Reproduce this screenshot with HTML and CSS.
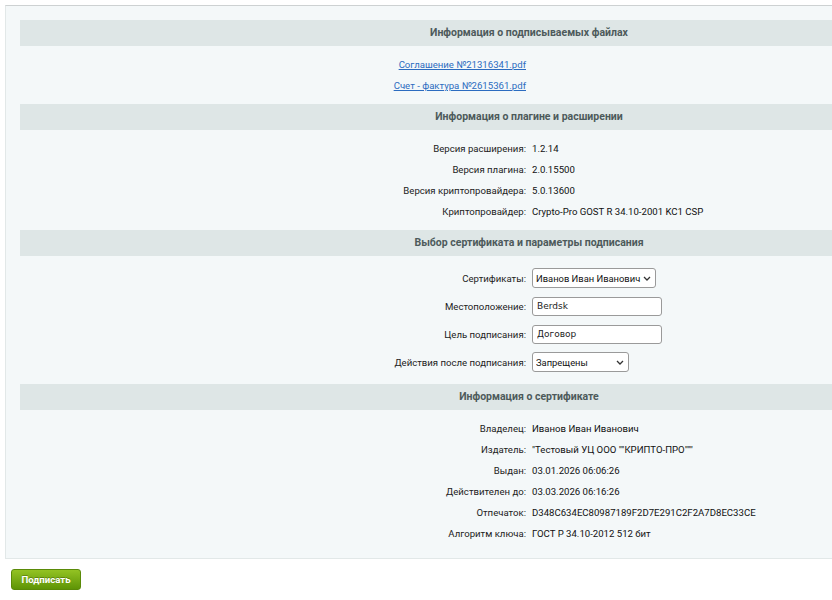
FILE: index.html
```html
<!DOCTYPE html>
<html lang="ru">
<head>
<meta charset="utf-8">
<title>Подписание</title>
<link rel="stylesheet" href="styles.css">
</head>
<body>
<div class="page">
  <div class="panel">
    <div class="sheet">
      <section class="section">
        <h2 class="head">Информация о подписываемых файлах</h2>
        <div class="rows">
          <div class="row"><div class="label"><a href="#">Соглашение №21316341.pdf</a></div><div class="value"></div></div>
          <div class="row"><div class="label"><a href="#">Счет - фактура №2615361.pdf</a></div><div class="value"></div></div>
        </div>
      </section>
      <section class="section">
        <h2 class="head">Информация о плагине и расширении</h2>
        <div class="rows">
          <div class="row"><div class="label">Версия расширения:</div><div class="value">1.2.14</div></div>
          <div class="row"><div class="label">Версия плагина:</div><div class="value">2.0.15500</div></div>
          <div class="row"><div class="label">Версия криптопровайдера:</div><div class="value">5.0.13600</div></div>
          <div class="row"><div class="label">Криптопровайдер:</div><div class="value">Crypto-Pro GOST R 34.10-2001 KC1 CSP</div></div>
        </div>
      </section>
      <section class="section">
        <h2 class="head">Выбор сертификата и параметры подписания</h2>
        <div class="rows">
          <div class="row form"><label class="label" for="cert">Сертификаты:</label><div class="value">
            <span class="select-wrap cert"><select id="cert" class="select"><option>Иванов Иван Иванович</option></select><svg class="chev" viewBox="0 0 8 5" width="8" height="5"><path d="M1 1 L4 4 L7 1" fill="none" stroke="#333" stroke-width="1.3"/></svg></span></div></div>
          <div class="row form"><label class="label" for="loc">Местоположение:</label><div class="value">
            <input id="loc" class="input" type="text" value="Berdsk"></div></div>
          <div class="row form"><label class="label" for="goal">Цель подписания:</label><div class="value">
            <input id="goal" class="input" type="text" value="Договор"></div></div>
          <div class="row form"><label class="label" for="act">Действия после подписания:</label><div class="value">
            <span class="select-wrap act"><select id="act" class="select"><option>Запрещены</option></select><svg class="chev" viewBox="0 0 8 5" width="8" height="5"><path d="M1 1 L4 4 L7 1" fill="none" stroke="#333" stroke-width="1.3"/></svg></span></div></div>
        </div>
      </section>
      <section class="section">
        <h2 class="head">Информация о сертификате</h2>
        <div class="rows">
          <div class="row"><div class="label">Владелец:</div><div class="value">Иванов Иван Иванович</div></div>
          <div class="row"><div class="label">Издатель:</div><div class="value">"Тестовый УЦ ООО ""КРИПТО-ПРО"""</div></div>
          <div class="row"><div class="label">Выдан:</div><div class="value">03.01.2026 06:06:26</div></div>
          <div class="row"><div class="label">Действителен до:</div><div class="value">03.03.2026 06:16:26</div></div>
          <div class="row"><div class="label">Отпечаток:</div><div class="value">D348C634EC80987189F2D7E291C2F2A7D8EC33CE</div></div>
          <div class="row"><div class="label">Алгоритм ключа:</div><div class="value">ГОСТ Р 34.10-2012 512 бит</div></div>
        </div>
      </section>
    </div>
  </div>
  <div class="actions">
    <button class="btn" type="button">Подписать</button>
  </div>
</div>
</body>
</html>
```

FILE: styles.css
```css
html, body {
  margin: 0;
  padding: 0;
  background: #ffffff;
}
body {
  font-family: Roboto, "Liberation Sans", Arial, sans-serif;
  font-size: 9.6px;
  color: #222;
}
.page {
  overflow: hidden;
  padding: 5px 0 20px 5px;
}
.panel {
  width: 1046px;
  background: #f4f8f9;
  border: 1px solid #e2e8e8;
  border-top-color: #cdd1d2;
  padding: 14px 14px 6px 14px;
}
.sheet {
  width: 1018px;
}
.head {
  margin: 0;
  height: 26px;
  line-height: 26px;
  background: #dee6e6;
  text-align: center;
  font-size: 10.5px;
  font-weight: bold;
  color: #4d5a5b;
}
.rows {
  padding: 8px 0;
}
.row {
  display: grid;
  grid-template-columns: 1fr 1fr;
  height: 21px;
  align-items: center;
}
.row.form {
  height: 28px;
}
.label {
  text-align: right;
  padding-right: 3px;
  color: #222;
}
.value {
  padding-left: 3px;
  color: #111;
  display: flex;
  align-items: center;
}
.label a {
  color: #2c6cc0;
  text-decoration: underline;
}
.input {
  box-sizing: border-box;
  width: 130px;
  height: 19px;
  border: 1px solid #9a9a9a;
  border-radius: 3px;
  background: #fff;
  padding: 0 4px;
  font-family: "DejaVu Sans", sans-serif;
  font-size: 9px;
  color: #222;
}
.select-wrap {
  position: relative;
  display: inline-block;
}
.select-wrap.act { width: 97px; }
.select {
  appearance: none;
  -webkit-appearance: none;
  box-sizing: border-box;
  height: 20px;
  border: 1px solid #9a9a9a;
  border-radius: 3px;
  background: #fff;
  font-family: Roboto, "Liberation Sans", Arial, sans-serif;
  font-size: 9.4px;
  color: #111;
  padding: 0 14px 0 3px;
}
.select-wrap.act .select { width: 100%; }
.chev {
  position: absolute;
  right: 5px;
  top: 8px;
  pointer-events: none;
}
.actions {
  padding: 10px 0 0 6px;
}
.btn {
  box-sizing: border-box;
  width: 70px;
  height: 21px;
  border: 1px solid #5a8a08;
  border-radius: 3px;
  background: linear-gradient(#93c323, #5e9406);
  color: #fff;
  font-family: Roboto, "Liberation Sans", Arial, sans-serif;
  font-size: 9.6px;
  font-weight: bold;
  text-shadow: 0 -1px 0 rgba(0,0,0,0.25);
  padding: 0;
}
```
